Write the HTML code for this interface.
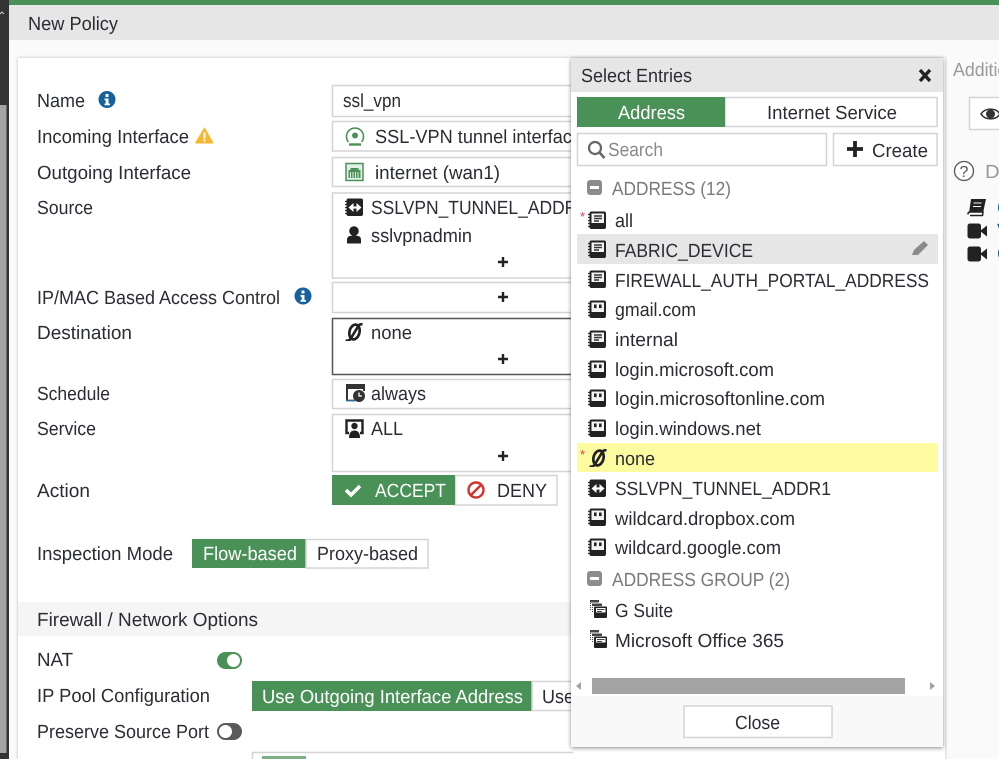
<!DOCTYPE html>
<html><head><meta charset="utf-8"><title>New Policy</title>
<style>
html,body{margin:0;padding:0;background:#fafafa;overflow:hidden}
svg{display:block}
text{font-family:"Liberation Sans",sans-serif;font-size:19px;fill:#2a2d33;text-rendering:geometricPrecision}
.g{fill:#7a7a7a}
.w{fill:#fff}
.b{fill:#fff;stroke:#d4d4d4;stroke-width:1.5}
</style></head><body>
<svg width="999" height="759" viewBox="0 0 999 759" xmlns="http://www.w3.org/2000/svg">
<defs>
<filter id="sh" x="-5%" y="-5%" width="110%" height="110%"><feDropShadow dx="0" dy="1" stdDeviation="2" flood-color="#000" flood-opacity=".45"/></filter>
<filter id="sh2" x="-3%" y="-3%" width="106%" height="106%"><feDropShadow dx="0" dy="0" stdDeviation="1.5" flood-color="#000" flood-opacity=".25"/></filter>
<clipPath id="left"><rect x="0" y="0" width="573" height="759"/></clipPath>
<clipPath id="right"><rect x="945" y="0" width="54" height="759"/></clipPath>
<symbol id="dots" viewBox="0 0 18 18" overflow="visible"><path d="M0 3.5h2.500M0 6.500h2.500M0 9.500h2.500M0 12.500h2.500M0 15.500h2.500" stroke="#333" stroke-width="1.300"/></symbol>
<symbol id="addr" viewBox="0 0 18 18"><use href="#dots" width="18" height="18"/><rect x="1.500" y="0.500" width="16.500" height="17.500" rx="2" fill="#222"/><rect x="3.500" y="2.500" width="12.500" height="9.500" fill="#f4f4f4"/><path d="M6 5h8M6 7.500h8M6 10h5" stroke="#333" stroke-width="1.400"/></symbol>
<symbol id="fqdn" viewBox="0 0 18 18"><use href="#dots" width="18" height="18"/><rect x="1.500" y="0.500" width="16.500" height="17.500" rx="2" fill="#222"/><rect x="3.500" y="2.500" width="12.500" height="9.500" fill="#f4f4f4"/><rect x="6" y="4.500" width="2.600" height="3.600" fill="#222"/><rect x="11" y="4.500" width="2.600" height="3.600" fill="#222"/></symbol>
<symbol id="tun" viewBox="0 0 18 18"><use href="#dots" width="18" height="18"/><rect x="1.500" y="0.500" width="16.500" height="17.500" rx="2" fill="#222"/><path d="M5.500 9.500h9" stroke="#fff" stroke-width="2.200"/><path d="M8.500 5l-5 4.500 5 4.500zM11.500 5l5 4.500-5 4.500z" fill="#fff"/></symbol>
<symbol id="none" viewBox="0 0 18 18"><ellipse cx="9.500" cy="9" rx="5" ry="7.500" fill="none" stroke="#222" stroke-width="2.700" transform="rotate(14 9.500 9)"/><path d="M0.500 17.500c3.500 .8 5-.8 6.500-4L13 3.500c.8-1.600 2.500-2.500 4.500-2.200" fill="none" stroke="#222" stroke-width="2.600"/></symbol>
<symbol id="grp" viewBox="0 0 18 18"><path d="M1 0h9v2.500H1zM3 3.500h10v2.500H3z" fill="#444"/><path d="M1.500 3v8M3.500 7v6" stroke="#444" stroke-dasharray="1 1"/><rect x="5" y="6.500" width="13" height="11.500" rx="1" fill="#222"/><rect x="7" y="8" width="9.500" height="4.500" fill="#fff"/><path d="M8 9.500h7.500M8 11.500h5" stroke="#444"/></symbol>
<symbol id="minus" viewBox="0 0 15 15"><rect width="15" height="15" rx="3" fill="#8c8c8c"/><rect x="3" y="6" width="9" height="3" fill="#fff"/></symbol>
</defs>

<!-- page chrome -->
<rect width="999" height="759" fill="#fafafa"/>
<rect x="0" y="0" width="9" height="759" fill="#333"/>
<rect x="0" y="105" width="6.500" height="648" fill="#a3a3a3"/>
<path d="M0 14l2 -2 2 2" stroke="#ccc" fill="none"/>
<rect x="9" y="0" width="990" height="5" fill="#4a9158"/>
<rect x="9" y="5" width="990" height="35" fill="#e6e6e6"/>
<text x="28" y="30" textLength="90" lengthAdjust="spacingAndGlyphs">New Policy</text>

<!-- card -->
<rect x="18" y="58" width="927" height="720" fill="#fff" filter="url(#sh2)"/>
<rect x="18" y="602" width="555" height="34" fill="#f5f5f5"/>

<!-- labels -->
<text x="37" y="107" textLength="48" lengthAdjust="spacingAndGlyphs">Name</text>
<circle cx="107" cy="99.500" r="8.500" fill="#16609b"/><rect x="105.500" y="94" width="3" height="3" fill="#fff"/><path d="M104.500 98.500h4v5h1.500v1.700h-5.500v-1.700h1.200v-3.300h-1.200z" fill="#fff"/>
<text x="37" y="143" textLength="152" lengthAdjust="spacingAndGlyphs">Incoming Interface</text>
<path d="M204.500 128l8.500 15h-17.500z" fill="#f7b733" stroke="#f7b733" stroke-linejoin="round"/><rect x="203.500" y="132.500" width="2" height="6" fill="#fff"/><rect x="203.500" y="139.500" width="2" height="2" fill="#fff"/>
<text x="37" y="179" textLength="154" lengthAdjust="spacingAndGlyphs">Outgoing Interface</text>
<text x="37" y="214" textLength="56" lengthAdjust="spacingAndGlyphs">Source</text>
<text x="37" y="304" textLength="243" lengthAdjust="spacingAndGlyphs">IP/MAC Based Access Control</text>
<circle cx="303" cy="296" r="8.500" fill="#16609b"/><rect x="301.500" y="290.500" width="3" height="3" fill="#fff"/><path d="M300.500 295h4v5h1.500v1.700h-5.500v-1.700h1.200v-3.300h-1.200z" fill="#fff"/>
<text x="37" y="339" textLength="95" lengthAdjust="spacingAndGlyphs">Destination</text>
<text x="37" y="400" textLength="73" lengthAdjust="spacingAndGlyphs">Schedule</text>
<text x="37" y="435" textLength="59" lengthAdjust="spacingAndGlyphs">Service</text>
<text x="37" y="497" textLength="53" lengthAdjust="spacingAndGlyphs">Action</text>
<text x="37" y="560" textLength="136" lengthAdjust="spacingAndGlyphs">Inspection Mode</text>
<text x="37" y="626" textLength="221" lengthAdjust="spacingAndGlyphs">Firewall / Network Options</text>
<text x="37" y="666" textLength="36" lengthAdjust="spacingAndGlyphs">NAT</text>
<text x="37" y="702" textLength="173" lengthAdjust="spacingAndGlyphs">IP Pool Configuration</text>
<text x="37" y="738" textLength="172" lengthAdjust="spacingAndGlyphs">Preserve Source Port</text>

<!-- fields -->
<g clip-path="url(#left)">
<rect class="b" x="332.500" y="85.500" width="300" height="31"/>
<text x="343" y="107" textLength="58" lengthAdjust="spacingAndGlyphs">ssl_vpn</text>
<rect class="b" x="332.500" y="121.500" width="300" height="29.500"/>
<path d="M348.500 142a8.500 8.500 0 1 1 13 0" fill="none" stroke="#4a9158" stroke-width="1.600"/><circle cx="355" cy="135.500" r="3" fill="#4a9158"/><path d="M349 144.500h12" stroke="#4a9158" stroke-width="2.400"/>
<text x="375" y="143" textLength="207" lengthAdjust="spacingAndGlyphs">SSL-VPN tunnel interface</text>
<rect class="b" x="332.500" y="157.500" width="300" height="29"/>
<rect x="346" y="163.500" width="17" height="17" fill="#e4efe5" stroke="#4a9158" stroke-width="1.500"/><path d="M348.500 170h2v-2h8v2h2v8h-12z" fill="#4a9158"/><path d="M350.500 172v6M353 172v6M355.500 172v6M358 172v6" stroke="#e4efe5"/>
<text x="375" y="179" textLength="125" lengthAdjust="spacingAndGlyphs">internet (wan1)</text>
<rect class="b" x="332.500" y="193" width="300" height="85"/>
<use href="#tun" x="345" y="198" width="18" height="18"/>
<text x="371" y="214" textLength="216" lengthAdjust="spacingAndGlyphs">SSLVPN_TUNNEL_ADDR1</text>
<circle cx="354" cy="231" r="4.800" fill="#222"/><path d="M347 243.500v-4c0-3 2.500-4 7-4s7 1 7 4v4z" fill="#222"/>
<text x="371" y="242" textLength="101" lengthAdjust="spacingAndGlyphs">sslvpnadmin</text>
<path d="M503 257v10M498 262h10" stroke="#222" stroke-width="2.400"/>
<rect class="b" x="332.500" y="282.500" width="300" height="30"/>
<path d="M503 292v10M498 297h10" stroke="#222" stroke-width="2.400"/>
<rect x="332.500" y="318.500" width="300" height="56" fill="#fff" stroke="#555" stroke-width="1.500"/>
<use href="#none" x="345" y="323" width="18" height="18"/>
<text x="371" y="339" textLength="41" lengthAdjust="spacingAndGlyphs">none</text>
<path d="M503 354v10M498 359h10" stroke="#222" stroke-width="2.400"/>
<rect class="b" x="332.500" y="379.500" width="300" height="29"/>
<path d="M347 400v-15h17v6" fill="none" stroke="#333" stroke-width="2"/><path d="M346 400.500h9" stroke="#2b6a9b" stroke-width="1.800"/><rect x="346" y="384.500" width="19" height="4.500" fill="#333"/><circle cx="359" cy="396" r="6" fill="#333"/><path d="M359 392.500v3.500h3" stroke="#fff" fill="none" stroke-width="1.300"/>
<text x="371" y="400" textLength="55" lengthAdjust="spacingAndGlyphs">always</text>
<rect class="b" x="332.500" y="414.500" width="300" height="57"/>
<path d="M349 433h-2.500v-12.500h16v12.500h-2.500" fill="none" stroke="#222" stroke-width="2.400"/><circle cx="354.500" cy="426" r="3.200" fill="#222"/><path d="M349 438c0-5 2-7.500 5.500-7.500s5.500 2.500 5.500 7.500z" fill="#222"/>
<text x="371" y="435" textLength="32" lengthAdjust="spacingAndGlyphs">ALL</text>
<path d="M503 451v10M498 456h10" stroke="#222" stroke-width="2.400"/>
<rect class="b" x="455" y="475.500" width="102" height="29.500"/>
<rect x="332" y="475" width="123" height="30" fill="#4a9158"/>
<path d="M346 490l5 5 9-9" fill="none" stroke="#fff" stroke-width="3.500"/>
<text class="w" x="375" y="497" textLength="71" lengthAdjust="spacingAndGlyphs">ACCEPT</text>
<circle cx="476" cy="490" r="7.500" fill="#fff" stroke="#d4312a" stroke-width="2.400"/><path d="M471 495l10-10" stroke="#d4312a" stroke-width="2.400"/>
<text x="497" y="497" textLength="50" lengthAdjust="spacingAndGlyphs">DENY</text>
<rect x="192" y="539" width="114" height="29" fill="#4a9158"/>
<text class="w" x="203" y="560" textLength="94" lengthAdjust="spacingAndGlyphs">Flow-based</text>
<rect class="b" x="306" y="539.500" width="122" height="28.500"/>
<text x="317" y="560" textLength="101" lengthAdjust="spacingAndGlyphs">Proxy-based</text>
<rect x="217" y="652" width="25" height="17" rx="8.500" fill="#4a9158"/><circle cx="233.500" cy="660.500" r="6.500" fill="#fff"/>
<rect x="252" y="681" width="280" height="30" fill="#4a9158"/>
<text class="w" x="262" y="703" textLength="261" lengthAdjust="spacingAndGlyphs">Use Outgoing Interface Address</text>
<rect class="b" x="532" y="681.500" width="100" height="29"/>
<text x="542" y="703" textLength="32" lengthAdjust="spacingAndGlyphs">Use</text>
<rect x="217" y="723" width="25" height="17" rx="8.500" fill="#5a5a5a"/><circle cx="225.500" cy="731.500" r="6.500" fill="#fff"/>
<rect x="252.500" y="752.500" width="400" height="30" class="b"/>
<rect x="262" y="756" width="44" height="10" fill="#7fb088"/>
</g>

<!-- right panel -->
<g clip-path="url(#right)">
<text x="953" y="76" textLength="78" lengthAdjust="spacingAndGlyphs" style="fill:#9a9a9a">Additional</text>
<rect class="b" x="969.500" y="97.500" width="80" height="32"/>
<path d="M981 114c4-6.500 15-6.500 19 0c-4 6.500-15 6.500-19 0z" fill="#fff" stroke="#333" stroke-width="1.600"/><circle cx="990.500" cy="114" r="4.500" fill="#333"/>
<circle cx="964" cy="171" r="9.500" fill="#fff" stroke="#555" stroke-width="1.300"/>
<text x="959.500" y="177" style="font-size:16px;fill:#555">?</text>
<text x="985" y="178" textLength="62" lengthAdjust="spacingAndGlyphs" style="fill:#9a9a9a">Details</text>
<path d="M971 199h15l-3 14h-14z" fill="#222"/><path d="M968 214.500c0-2.500 1-2.500 3-2.500h12l-.5 3.500h-12.500" fill="#fff" stroke="#222" stroke-width="1.500"/><path d="M973.500 203h8M973 206.500h8" stroke="#fff"/>
<rect x="967.500" y="223.500" width="13.500" height="15" rx="2.500" fill="#222"/><path d="M980 231l7-5.500v11z" fill="#222"/>
<rect x="967.500" y="246.500" width="13.500" height="15" rx="2.500" fill="#222"/><path d="M980 254l7-5.500v11z" fill="#222"/>
<text x="997" y="214" style="fill:#16609b">C</text>
<text x="997" y="237" style="fill:#16609b">V</text>
<text x="997" y="260" style="fill:#16609b">C</text>
</g>

<!-- popup -->
<rect x="571" y="58" width="372" height="689" fill="#fff" filter="url(#sh)"/>
<rect x="571" y="58" width="372" height="34" fill="#e6e6e6"/>
<text x="581" y="82" textLength="111" lengthAdjust="spacingAndGlyphs">Select Entries</text>
<path d="M920 70l10 11M930 70l-10 11" stroke="#222" stroke-width="3.400"/>
<rect class="b" x="725" y="97.500" width="212" height="29"/>
<rect x="577" y="97" width="148" height="30" fill="#4a9158"/>
<text class="w" x="618" y="119" textLength="67" lengthAdjust="spacingAndGlyphs">Address</text>
<text x="767" y="119" textLength="130" lengthAdjust="spacingAndGlyphs">Internet Service</text>
<rect class="b" x="577.500" y="133.500" width="249" height="32"/>
<circle cx="595" cy="148" r="6" fill="none" stroke="#666" stroke-width="2.200"/><path d="M599.500 152.500l5 5.500" stroke="#666" stroke-width="2.600"/>
<text x="608" y="156" textLength="55" lengthAdjust="spacingAndGlyphs" style="fill:#8a8a8a">Search</text>
<rect class="b" x="833.500" y="133.500" width="103.500" height="32"/>
<path d="M855 141v16M847 149h16" stroke="#222" stroke-width="3.800"/>
<text x="872" y="157" textLength="56" lengthAdjust="spacingAndGlyphs">Create</text>

<use href="#minus" x="587" y="180" width="15" height="15"/>
<text class="g" x="612" y="195" textLength="119" lengthAdjust="spacingAndGlyphs">ADDRESS (12)</text>

<text x="580" y="221" style="fill:#e0455a;font-size:13px">*</text>
<use href="#addr" x="588" y="211" width="18" height="18"/>
<text x="615" y="227" textLength="18" lengthAdjust="spacingAndGlyphs">all</text>

<rect x="577" y="234" width="361" height="30" fill="#e6e6e6"/>
<use href="#addr" x="588" y="240" width="18" height="18"/>
<text x="615" y="257" textLength="138" lengthAdjust="spacingAndGlyphs">FABRIC_DEVICE</text>
<path d="M912 255l2-5 10-9 4 4-10 10z" fill="#8a8a8a"/>

<use href="#addr" x="588" y="270" width="18" height="18"/>
<text x="615" y="287" textLength="314" lengthAdjust="spacingAndGlyphs">FIREWALL_AUTH_PORTAL_ADDRESS</text>
<use href="#fqdn" x="588" y="300" width="18" height="18"/>
<text x="615" y="316" textLength="81" lengthAdjust="spacingAndGlyphs">gmail.com</text>
<use href="#addr" x="588" y="330" width="18" height="18"/>
<text x="615" y="346" textLength="63" lengthAdjust="spacingAndGlyphs">internal</text>
<use href="#fqdn" x="588" y="360" width="18" height="18"/>
<text x="615" y="376" textLength="159" lengthAdjust="spacingAndGlyphs">login.microsoft.com</text>
<use href="#fqdn" x="588" y="389" width="18" height="18"/>
<text x="615" y="405" textLength="210" lengthAdjust="spacingAndGlyphs">login.microsoftonline.com</text>
<use href="#fqdn" x="588" y="419" width="18" height="18"/>
<text x="615" y="435" textLength="146" lengthAdjust="spacingAndGlyphs">login.windows.net</text>

<rect x="577" y="443" width="361" height="29" fill="#fdfba0"/>
<text x="580" y="459" style="fill:#e0455a;font-size:13px">*</text>
<use href="#none" x="589" y="449" width="18" height="18"/>
<text x="615" y="465" textLength="40" lengthAdjust="spacingAndGlyphs">none</text>

<use href="#tun" x="588" y="479" width="18" height="18"/>
<text x="615" y="495" textLength="216" lengthAdjust="spacingAndGlyphs">SSLVPN_TUNNEL_ADDR1</text>
<use href="#fqdn" x="588" y="508" width="18" height="18"/>
<text x="615" y="525" textLength="180" lengthAdjust="spacingAndGlyphs">wildcard.dropbox.com</text>
<use href="#fqdn" x="588" y="538" width="18" height="18"/>
<text x="615" y="554" textLength="166" lengthAdjust="spacingAndGlyphs">wildcard.google.com</text>

<use href="#minus" x="587" y="571" width="15" height="15"/>
<text class="g" x="612" y="586" textLength="178" lengthAdjust="spacingAndGlyphs">ADDRESS GROUP (2)</text>
<use href="#grp" x="589" y="600" width="18" height="18"/>
<text x="615" y="617" textLength="58" lengthAdjust="spacingAndGlyphs">G Suite</text>
<use href="#grp" x="589" y="630" width="18" height="18"/>
<text x="615" y="647" textLength="169" lengthAdjust="spacingAndGlyphs">Microsoft Office 365</text>

<rect x="592" y="678" width="313" height="16" fill="#a3a3a3"/>
<path d="M581 682v8l-5-4z" fill="#a3a3a3"/><path d="M930 682v8l5-4z" fill="#a3a3a3"/>
<rect x="571" y="696" width="372" height="51" fill="#f9f9f9"/>
<rect class="b" x="684" y="706" width="148" height="31.500"/>
<text x="735" y="729" textLength="45" lengthAdjust="spacingAndGlyphs">Close</text>
</svg>
</body></html>
